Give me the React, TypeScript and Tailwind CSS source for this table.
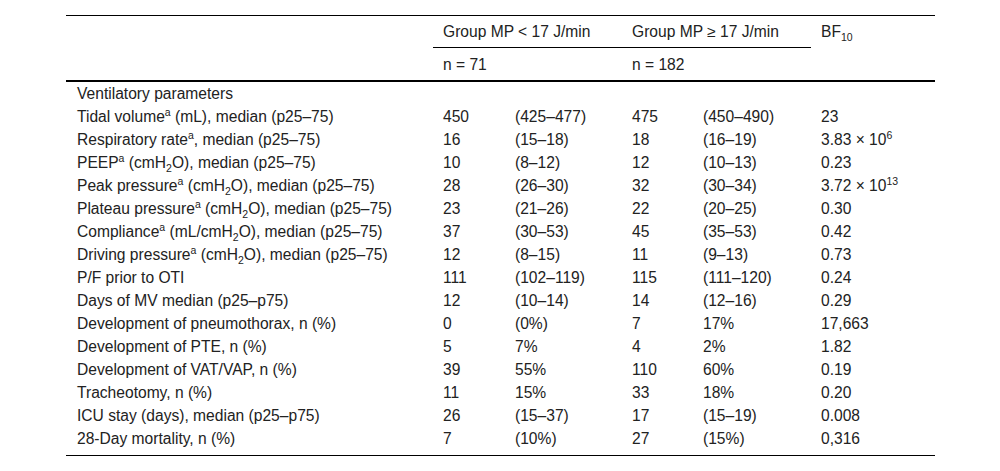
import React from 'react';

type Row = {
  label: React.ReactNode;
  a: string;
  ar: string;
  b: string;
  br: string;
  bf: React.ReactNode;
};

const Sup = ({ children }: { children: React.ReactNode }) => (
  <sup className="text-[10.5px] align-baseline relative -top-[6px]">{children}</sup>
);
const Sub = ({ children }: { children: React.ReactNode }) => (
  <sub className="text-[10.5px] align-baseline relative top-[4px] bottom-auto">{children}</sub>
);
const H2O = () => (
  <>
    cmH<Sub>2</Sub>O
  </>
);

const rows: Row[] = [
  { label: <>Tidal volume<Sup>a</Sup> (mL), median (p25–75)</>, a: '450', ar: '(425–477)', b: '475', br: '(450–490)', bf: '23' },
  { label: <>Respiratory rate<Sup>a</Sup>, median (p25–75)</>, a: '16', ar: '(15–18)', b: '18', br: '(16–19)', bf: <>3.83 × 10<Sup>6</Sup></> },
  { label: <>PEEP<Sup>a</Sup> (<H2O />), median (p25–75)</>, a: '10', ar: '(8–12)', b: '12', br: '(10–13)', bf: '0.23' },
  { label: <>Peak pressure<Sup>a</Sup> (<H2O />), median (p25–75)</>, a: '28', ar: '(26–30)', b: '32', br: '(30–34)', bf: <>3.72 × 10<Sup>13</Sup></> },
  { label: <>Plateau pressure<Sup>a</Sup> (<H2O />), median (p25–75)</>, a: '23', ar: '(21–26)', b: '22', br: '(20–25)', bf: '0.30' },
  { label: <>Compliance<Sup>a</Sup> (mL/<H2O />), median (p25–75)</>, a: '37', ar: '(30–53)', b: '45', br: '(35–53)', bf: '0.42' },
  { label: <>Driving pressure<Sup>a</Sup> (<H2O />), median (p25–75)</>, a: '12', ar: '(8–15)', b: '11', br: '(9–13)', bf: '0.73' },
  { label: 'P/F prior to OTI', a: '111', ar: '(102–119)', b: '115', br: '(111–120)', bf: '0.24' },
  { label: 'Days of MV median (p25–p75)', a: '12', ar: '(10–14)', b: '14', br: '(12–16)', bf: '0.29' },
  { label: 'Development of pneumothorax, n (%)', a: '0', ar: '(0%)', b: '7', br: '17%', bf: '17,663' },
  { label: 'Development of PTE, n (%)', a: '5', ar: '7%', b: '4', br: '2%', bf: '1.82' },
  { label: 'Development of VAT/VAP, n (%)', a: '39', ar: '55%', b: '110', br: '60%', bf: '0.19' },
  { label: 'Tracheotomy, n (%)', a: '11', ar: '15%', b: '33', br: '18%', bf: '0.20' },
  { label: 'ICU stay (days), median (p25–p75)', a: '26', ar: '(15–37)', b: '17', br: '(15–19)', bf: '0.008' },
  { label: '28-Day mortality, n (%)', a: '7', ar: '(10%)', b: '27', br: '(15%)', bf: '0,316' },
];

export default function App() {
  return (
    <div className="bg-white w-[1000px] h-[471px] pt-[15px] pl-[66px] text-[#222] text-[15.6px] leading-[23px] font-['Liberation_Sans',Arial,sans-serif]">
      <div className="w-[869px] border-t border-black">
        {/* header */}
        <div className="grid grid-cols-[367px_72px_117px_71px_118px_124px]">
          <div className="row-span-2 border-b-2 border-black" />
          <div className="col-span-2 h-[32px] pl-[10px] flex items-center border-b-[1.5px] border-black">
            Group MP &lt; 17 J/min
          </div>
          <div className="col-span-2 h-[32px] pl-[10px] flex items-center border-b-[1.5px] border-black">
            Group MP ≥ 17 J/min
          </div>
          <div className="row-span-2 pl-[10px] pt-[4px] border-b-2 border-black">
            BF<Sub>10</Sub>
          </div>
          <div className="col-span-2 h-[34px] pl-[10px] flex items-center border-b-2 border-black">n = 71</div>
          <div className="col-span-2 h-[34px] pl-[10px] flex items-center border-b-2 border-black">n = 182</div>
        </div>

        {/* body */}
        <div className="pb-[5px] border-b border-black">
          <div className="h-[23px] pl-[11px]">Ventilatory parameters</div>
          {rows.map((r, i) => (
            <div key={i} className="grid grid-cols-[367px_72px_117px_71px_118px_124px] h-[23px] whitespace-nowrap">
              <div className="pl-[11px]">{r.label}</div>
              <div className="pl-[10px]">{r.a}</div>
              <div className="pl-[10px]">{r.ar}</div>
              <div className="pl-[10px]">{r.b}</div>
              <div className="pl-[10px]">{r.br}</div>
              <div className="pl-[10px]">{r.bf}</div>
            </div>
          ))}
        </div>
      </div>
    </div>
  );
}
